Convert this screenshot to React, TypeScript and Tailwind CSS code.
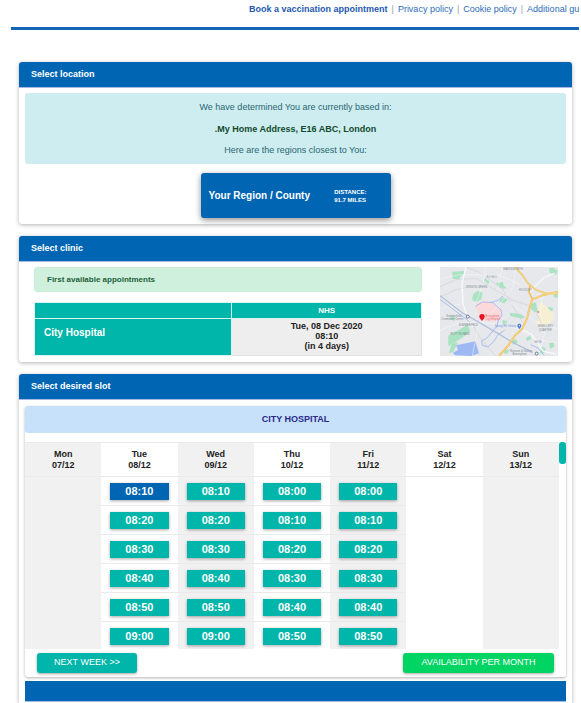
import type { ReactNode } from 'react';
import clsx from 'clsx';

interface Day {
  name: string;
  date: string;
  slots: string[];
}

const days: Day[] = [
  { name: 'Mon', date: '07/12', slots: [] },
  { name: 'Tue', date: '08/12', slots: ['08:10', '08:20', '08:30', '08:40', '08:50', '09:00'] },
  { name: 'Wed', date: '09/12', slots: ['08:10', '08:20', '08:30', '08:40', '08:50', '09:00'] },
  { name: 'Thu', date: '10/12', slots: ['08:00', '08:10', '08:20', '08:30', '08:40', '08:50'] },
  { name: 'Fri', date: '11/12', slots: ['08:00', '08:10', '08:20', '08:30', '08:40', '08:50'] },
  { name: 'Sat', date: '12/12', slots: [] },
  { name: 'Sun', date: '13/12', slots: [] },
];

const rows = [0, 1, 2, 3, 4, 5];

const Nav: React.FC = () => (
  <nav className="flex h-[27px] items-start gap-1 overflow-hidden whitespace-nowrap pl-[238px] pt-[3px] text-[9px] leading-3 text-[#2c6cb8]">
    <a href="#book" className="font-bold text-[#2458b0]">Book a vaccination appointment</a>
    <span className="text-gray-400">|</span>
    <a href="#privacy">Privacy policy</a>
    <span className="text-gray-400">|</span>
    <a href="#cookies">Cookie policy</a>
    <span className="text-gray-400">|</span>
    <a href="#guidance">Additional guidance</a>
  </nav>
);

const Card: React.FC<{ title: string; className?: string; children: ReactNode }> = ({ title, className, children }) => (
  <section className={clsx('rounded-[3px] bg-white shadow-[0_1px_4px_rgba(0,0,0,0.3)]', className)}>
    <h2 className="flex h-[26px] items-center rounded-t-[3px] border-b border-[#a9b9e4] bg-[#0066b4] pl-3 text-[9px] font-bold text-white">
      {title}
    </h2>
    {children}
  </section>
);

const ClinicMap: React.FC = () => (
  <svg viewBox="13 15 354 267" className="h-[89px] w-[118px] shrink-0" role="img" aria-label="Map of the clinic">
    <rect x="13" y="15" width="354" height="267" fill="#e6e8ec" />
    {/* parks */}
    <g fill="#a9e3c2">
      <path d="M50 29l35-2 4 10-14 6-6 10-18-3z" />
      <path d="M113 96l14-10 14 6-4 20-14 8-14-6z" />
      <path d="M147 48l14 10-3 8-12-9z" />
      <path d="M181 63l20-3 4 12 8 6-12 2-14-6z" />
      <path d="M192 113l12-8 12 8-10 11-14-3z" />
      <path d="M222 152l32 4 14 10-10 4-34-8z" />
      <path d="M284 126l16-5 7 30-12-2-13-12z" />
      <path d="M340 19l12-2 14 10-5 12-18-6z" />
      <path d="M338 135l14 3-2 9-12-3z" />
      <path d="M354 95l12 0 0 14-12-4z" />
      <path d="M202 174l14 4-9 10-8-5z" />
      <path d="M38 221l58-33 8 22-26 18-40 25z" />
      <path d="M48 246l14-5 4 4-14 26-12 2z" />
      <path d="M50 161l12 9-16 5-5-8z" />
      <path d="M270 228l15-8 2 10-12 7z" />
      <path d="M230 235l12-3 4 10-14 6z" />
      <path d="M318 254l12 4-4 16-14 0z" />
      <path d="M340 244l13-3 3 13-12 6z" />
      <path d="M206 262l14 2-3 10-12 1z" />
    </g>
    <path d="M62 250l57-12 11 36-22 8-50-2-6-8 15-8z" fill="#9db8f3" />
    <path d="M308 128l10-7 12 10 8 9 14 14 2 17-14 14-22 10-15-8 6-26z" fill="#f6efd2" />
    <path d="M118 130l20-12 26 2 32 24 2 17-8 14-20 4-34-2-8-22z" fill="#fbd8d9" />
    {/* railways and minor roads */}
    <g fill="none" stroke="#d0d2d6" strokeWidth="2">
      <path d="M13 74l50-22 60-2 50 30 60 35 60 20 30 60" />
      <path d="M90 15l40 15 70 50 60 100" />
      <path d="M13 105l48-22 30-6" />
      <path d="M180 282l-50-60-44-76" />
    </g>
    <g fill="none" stroke="#f8f9fa" strokeWidth="1.5">
      <path d="M91 15l-12 50 3 60 12 40 18 30" strokeWidth="4" />
      <path d="M13 205l50-20 60-6 60 8 60 12 54 32 70 12" />
      <path d="M110 282l18-90 64-65 40-52 8-60" />
      <path d="M283 90l40-42 34-15" strokeWidth="4" />
      <path d="M13 50l60-12 120 2 60 28" />
      <path d="M320 95l-6 55 14 60-20 72" />
      <path d="M259 203l30 15 34 50 40 8" strokeWidth="4" />
      <path d="M150 15l-8 50-20 55M200 15l-15 72M13 140l68-15M222 120l78 60 65 20" />
    </g>
    {/* canals */}
    <g fill="none" stroke="#9fb6ee" strokeWidth="2.5">
      <path d="M13 101l68 52 60 34 90 54 60 30" stroke="#b4c0da" strokeWidth="4" />
      <path d="M120 133l20-13 32 2 24 22 3 15-12 18-2 14-32 38-16 8 4 13 15 5 18-16 13-21 20-13" />
      <path d="M164 122l24-8 14-12M13 112l90 68" />
      <path d="M285 248l22 10 18 22" />
    </g>
    {/* main roads */}
    <g fill="none" strokeLinejoin="round" strokeLinecap="round">
      <path d="M190 282l28-32 22-32 20-18 14-30 8-34 8-24 30-12 46-10" stroke="#f0bf5c" strokeWidth="6" />
      <path d="M240 17l18 20 20 28 22 18 28 10 38 2M290 110l-10-18 2-18" stroke="#f0bf5c" strokeWidth="5" />
      <path d="M190 282l28-32 22-32 20-18 14-30 8-34 8-24 30-12 46-10M240 17l18 20 20 28 22 18 28 10 38 2" stroke="#f8d88a" strokeWidth="3" />
    </g>
    <g fill="#858b95" fontSize="8" fontFamily="Liberation Sans, Arial, sans-serif" textAnchor="middle">
      <text x="232" y="24">HANDSWORTH</text>
      <text x="168" y="47">S O H O</text>
      <text x="123" y="79">WINSON GREEN</text>
      <text x="269" y="86">HOCKLEY</text>
      <text x="54" y="164">Summerfield</text>
      <text x="50" y="175">Community Centre</text>
      <text x="98" y="191">SUMMERFIELD</text>
      <text x="73" y="220">ROTTON PARK</text>
      <text x="329" y="196">JEWELLERY</text>
      <text x="329" y="206">QUARTER</text>
      <text x="307" y="243">Hill St</text>
      <text x="256" y="270">Museum &amp; Gallery</text>
      <text x="252" y="279">Birmingham</text>
      <g fill="#ea6c75">
        <text x="170" y="166">Birmingham</text>
        <text x="171" y="175">City Hospital</text>
      </g>
      <text x="209" y="196" fill="#6b90e3">Spring Hill Library</text>
    </g>
    <circle cx="96" cy="164" r="4.5" fill="#fff" stroke="#607785" strokeWidth="3" />
    <circle cx="303" cy="275" r="4.5" fill="#fff" stroke="#607785" strokeWidth="3" />
    <circle cx="251" cy="191" r="4" fill="#fff" stroke="#4a78dd" strokeWidth="4" />
    <path d="M251 202l-4-6h8z" fill="#4a78dd" />
    <path d="M139 177c-2-5-8-7-8-13a8 8 0 0 1 16 0c0 6-6 8-8 13z" fill="#e8101f" />
    <path d="M305 150h6M308 147v6" stroke="#ef6a70" strokeWidth="2" />
  </svg>
);

const SlotTable: React.FC = () => (
  <table className="w-full table-fixed border-collapse text-center">
    <thead>
      <tr className="h-[34px]">
        {days.map((day, i) => (
          <th
            key={day.name}
            className={clsx('border-y border-[#eaeaea] p-0 text-[9px] font-bold leading-[11px] text-[#222]', i % 2 === 0 && 'bg-[#f1f1f1]')}
          >
            {day.name}
            <br />
            {day.date}
          </th>
        ))}
      </tr>
    </thead>
    <tbody>
      {rows.map((row) => (
        <tr key={row} className="h-[29px]">
          {days.map((day, i) => (
            <td
              key={day.name}
              className={clsx('px-[9px] py-0', i % 2 === 0 && 'bg-[#f1f1f1]', day.slots.length > 0 && 'border-b border-[#eaeaea]')}
            >
              {day.slots[row] && (
                <button
                  type="button"
                  className={clsx(
                    'block h-[17px] w-full text-[11px] font-bold leading-[17px] text-white shadow-[0_1px_3px_rgba(0,0,0,0.35)]',
                    row === 0 && day.name === 'Tue' ? 'bg-[#0066b4]' : 'bg-[#00b5a9]'
                  )}
                >
                  {day.slots[row]}
                </button>
              )}
            </td>
          ))}
        </tr>
      ))}
    </tbody>
  </table>
);

const App: React.FC = () => (
  <div className="min-h-screen overflow-hidden bg-white font-['Liberation_Sans',Arial,sans-serif]">
    <header className="ml-[11px] mr-[2px] border-b-[3px] border-[#1465b5]">
      <Nav />
    </header>

    <main className="ml-[19px] mr-[9px] mt-8 flex flex-col gap-3">
      <Card title="Select location" className="pb-[6px]">
        <div className="mx-[6px] mt-[5px] flex h-[71px] flex-col items-center justify-between rounded-[3px] bg-[#cdedf0] py-[7px] text-[9px] leading-[14px] text-[#2b6672]">
          <p>We have determined You are currently based in:</p>
          <p className="font-bold text-[#134a2c]">.My Home Address, E16 ABC, London</p>
          <p>Here are the regions closest to You:</p>
        </div>
        <button
          type="button"
          className="mx-auto mt-[9px] flex h-[45px] w-[190px] items-center justify-between rounded-[3px] bg-[#0066b4] pl-2 pr-6 font-bold text-white shadow-[0_2px_6px_rgba(0,0,0,0.45)]"
        >
          <span className="text-[10px]">Your Region / County</span>
          <span className="text-left text-[6px] leading-2">
            DISTANCE:
            <br />
            91.7 MILES
          </span>
        </button>
      </Card>

      <Card title="Select clinic" className="pb-[6px]">
        <div className="mt-[5px] flex justify-between pl-[15px] pr-[14px]">
          <div className="mr-[18px] flex-1">
            <p className="flex h-[25px] items-center rounded-[3px] border border-[#c8edd6] bg-[#cff0dc] pl-3 text-[8px] font-bold text-[#1d6039]">
              First available appointments
            </p>
            <table className="mt-[10px] w-full table-fixed border-collapse">
              <thead>
                <tr className="h-4 bg-[#00b5a9] text-[8px] leading-3 text-white">
                  <td className="w-[51%] border border-[#d8f3f0]" />
                  <th className="border border-[#d8f3f0] p-0">NHS</th>
                </tr>
              </thead>
              <tbody>
                <tr className="h-[37px]">
                  <th className="border border-[#d8f3f0] bg-[#00b5a9] pb-[10px] pl-[9px] text-left align-middle text-[10px] text-white">
                    City Hospital
                  </th>
                  <td className="border border-[#e2e2e2] bg-[#eeeeee] p-0 text-center align-top text-[9px] font-bold leading-[10px] text-[#222]">
                    <div className="pt-[2px]">Tue, 08 Dec 2020</div>
                    <div>08:10</div>
                    <div>(in 4 days)</div>
                  </td>
                </tr>
              </tbody>
            </table>
          </div>
          <ClinicMap />
        </div>
      </Card>

      <Card title="Select desired slot" className="rounded-b-none pb-[2px]">
        <div className="mx-[6px] mt-[6px] rounded-[3px] shadow-[0_1px_3px_rgba(0,0,0,0.3)]">
          <h3 className="flex h-[27px] items-center justify-center rounded-[3px] bg-[#c8e1fb] text-[9px] font-bold text-[#29298b]">
            CITY HOSPITAL
          </h3>
          <div className="mt-[9px] flex h-[207px] overflow-hidden">
            <div className="flex-1">
              <SlotTable />
            </div>
            <div className="h-[22px] w-[7px] rounded-[3px] bg-[#00b5a9]" />
          </div>
          <div className="flex justify-between px-3 py-1 text-[9px] text-white">
            <button type="button" className="h-5 w-[100px] rounded-[3px] bg-[#00b5a9] shadow-[0_1px_3px_rgba(0,0,0,0.35)]">
              NEXT WEEK &gt;&gt;
            </button>
            <button type="button" className="h-5 w-[151px] rounded-[3px] bg-[#00d563] shadow-[0_1px_3px_rgba(0,0,0,0.35)]">
              AVAILABILITY PER MONTH
            </button>
          </div>
        </div>
        <div className="mx-[6px] mt-1 h-[21px] border-b border-[#a9b9e4] bg-[#0066b4]" />
      </Card>
    </main>
  </div>
);

export default App;
